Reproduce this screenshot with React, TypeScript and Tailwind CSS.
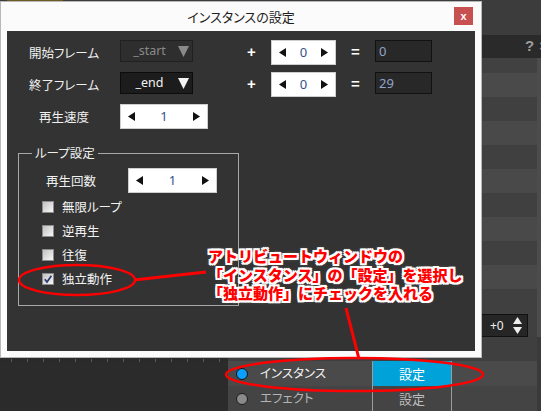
import React from 'react';

function Tri({ dir, color = '#111' }: { dir: 'l' | 'r'; color?: string }) {
  return (
    <svg width="7" height="9" viewBox="0 0 7 9">
      <polygon points={dir === 'l' ? '7,0 7,9 0,4.5' : '0,0 0,9 7,4.5'} fill={color} />
    </svg>
  );
}

function Spinner({ value, w }: { value: string; w: string }) {
  return (
    <div className={`${w} h-[25px] bg-white border border-[#cfcfcf] flex items-center justify-between px-[7px]`}>
      <Tri dir="l" />
      <span className="text-[13px] leading-none text-[#34508c] font-['Noto_Sans',sans-serif]">{value}</span>
      <Tri dir="r" />
    </div>
  );
}

function Dropdown({ value, disabled }: { value: string; disabled?: boolean }) {
  const c = disabled ? '#8a8a8a' : '#f2f2f2';
  return (
    <div
      className={`w-[73px] h-[22px] flex items-center pr-[3px] border ${
        disabled ? 'bg-[#2e2e2e] border-[#202020] text-[#8a8a8a]' : 'bg-[#1c1c1c] border-[#0c0c0c] text-[#f2f2f2]'
      }`}
    >
      <span className="flex-1 text-center text-[12.5px] leading-none font-['Noto_Sans',sans-serif]">{value}</span>
      <svg width="11" height="11" viewBox="0 0 11 11">
        <polygon points="0,0 11,0 5.5,11" fill={c} />
      </svg>
    </div>
  );
}

function Output({ value }: { value: string }) {
  return (
    <div className="w-[57px] h-[22px] bg-[#282828] border border-[#111] flex items-center pl-[3px] text-[13px] leading-none text-[#8fa3cc] font-['Noto_Sans',sans-serif]">
      {value}
    </div>
  );
}

function Sign({ ch }: { ch: string }) {
  return (
    <div className="w-[39px] h-[25px] flex items-center justify-center text-[15px] font-bold text-white font-['Liberation_Sans',sans-serif]">
      {ch}
    </div>
  );
}

function Check({ label, checked }: { label: string; checked?: boolean }) {
  return (
    <div className="h-[24px] flex items-center gap-[8px] pl-[23px]">
      <div className="w-[12px] h-[12px] border border-[#8c8c8c] bg-gradient-to-br from-[#c2c2c2] to-[#f7f7f7] flex items-center justify-center">
        {checked && (
          <svg width="10" height="10" viewBox="0 0 10 10">
            <path d="M1.8 5.2 L4 8 L8.4 1.8" stroke="#2a3b72" strokeWidth="1.7" fill="none" />
          </svg>
        )}
      </div>
      <span className="text-[12.5px] text-[#f2f2f2]">{label}</span>
    </div>
  );
}

function Dialog() {
  return (
    <div className="absolute left-0 top-[1px] w-[482px] h-[357px] bg-[#fbfbfb] border border-[#b8b8b8] flex flex-col">
      <div className="relative h-[29px] flex items-center justify-center">
        <span className="text-[13px] text-[#1e1e1e]">インスタンスの設定</span>
        <div className="absolute right-[8px] top-[5px] w-[19px] h-[18px] bg-[#c75050] flex items-center justify-center text-white text-[11px] font-bold leading-none font-['Liberation_Sans',sans-serif]">
          x
        </div>
      </div>
      <div className="mx-[6px] mb-[6px] flex-1 bg-[#333333] pt-[9px] flex flex-col">
        <div className="flex flex-col gap-[7px]">
          <div className="flex items-start">
            <div className="ml-[13px] w-[88px] h-[25px] leading-[25px] text-center text-[12.5px] text-[#f0f0f0]">開始フレーム</div>
            <div className="ml-[12px]"><Dropdown value="_start" disabled /></div>
            <div className="ml-[39px]"><Sign ch="+" /></div>
            <Spinner value="0" w="w-[65px]" />
            <Sign ch="=" />
            <Output value="0" />
          </div>
          <div className="flex items-start">
            <div className="ml-[13px] w-[88px] h-[25px] leading-[25px] text-center text-[12.5px] text-[#f0f0f0]">終了フレーム</div>
            <div className="ml-[12px]"><Dropdown value="_end" /></div>
            <div className="ml-[39px]"><Sign ch="+" /></div>
            <Spinner value="0" w="w-[65px]" />
            <Sign ch="=" />
            <Output value="29" />
          </div>
          <div className="flex items-start">
            <div className="ml-[13px] w-[88px] h-[25px] leading-[25px] text-center text-[12.5px] text-[#f0f0f0]">再生速度</div>
            <div className="ml-[12px]"><Spinner value="1" w="w-[88px]" /></div>
          </div>
        </div>

        <fieldset className="ml-[11px] mt-[16px] w-[221px] border border-[#a8a8a8] pb-[14px]">
          <legend className="ml-[13px] px-[3px] text-[12.5px] leading-[16px] text-[#f0f0f0]">ループ設定</legend>
          <div className="mt-[7px] flex items-start">
            <div className="ml-[8px] w-[88px] h-[25px] leading-[25px] text-center text-[12.5px] text-[#f0f0f0]">再生回数</div>
            <div className="ml-[13px]"><Spinner value="1" w="w-[89px]" /></div>
          </div>
          <div className="mt-[2px] flex flex-col">
            <Check label="無限ループ" />
            <Check label="逆再生" />
            <Check label="往復" />
            <Check label="独立動作" checked />
          </div>
        </fieldset>
      </div>
    </div>
  );
}

function Background() {
  const ticks = Array.from({ length: 14 });
  return (
    <div className="flex flex-col h-full">
      <div className="h-[35px] bg-[#3c3c3c]">
        <div className="ml-[7px] w-[56px] h-[1px] bg-[#6b5c22]" />
      </div>
      <div className="h-[23px] bg-[#2a2a2a] flex items-center justify-end gap-[5px] text-[15px] font-bold text-[#9c9c9c] font-['Liberation_Sans',sans-serif]">
        <span>?</span>
        <span className="-mr-[7px]">×</span>
      </div>
      <div className="flex flex-1">
        <div className="w-[228px] flex flex-col">
          <div className="flex-1 bg-[#333333]" />
          <div className="h-[53px] bg-[#2b2b2b]">
            <div className="h-[4px] bg-[#2a2a2a] flex items-end gap-[15px] pl-[11px]">
              {ticks.map((_, i) => (
                <div key={i} className="w-[1px] h-[3px] bg-[#5a5a5a]" />
              ))}
            </div>
          </div>
        </div>
        <div className="flex-1 flex">
          <div className="flex-1 flex flex-col">
            <div className="h-[15px] bg-[#414141]" />
            <div className="h-[24px] bg-[#4a4a4a]" />
            <div className="h-[24px] bg-[#404040]" />
            <div className="h-[24px] bg-[#494949]" />
            <div className="h-[24px] bg-[#404040]" />
            <div className="h-[24px] bg-[#494949]" />
            <div className="h-[24px] bg-[#404040]" />
            <div className="h-[24px] bg-[#494949]" />
            <div className="h-[24px] bg-[#404040]" />
            <div className="h-[24px] bg-[#494949]" />
            <div className="h-[24px] bg-[#404040]" />
            <div className="h-[24px] bg-[#404040] flex items-end">
              <div className="ml-[250px] w-[50px] h-[23px] bg-[#262626] border border-[#111] flex items-center justify-between pl-[11px] pr-[5px]">
                <span className="text-[12px] text-[#eee] font-['Noto_Sans',sans-serif]">+0</span>
                <svg width="9" height="18" viewBox="0 0 9 18">
                  <polygon points="4.5,0 9,7 0,7" fill="#eee" />
                  <polygon points="0,10 9,10 4.5,17" fill="#eee" />
                </svg>
              </div>
            </div>
            <div className="h-[24px] bg-[#3f3f3f]" />
            <div className="h-[25px] bg-[#4a4a4a] flex">
              <div className="w-[144px] flex items-center pl-[8px] gap-[12px]">
                <div className="w-[12px] h-[12px] rounded-full bg-[#0aa0ff] border border-[#111]" />
                <span className="text-[12.5px] text-[#f2f2f2]">インスタンス</span>
              </div>
              <div className="w-[80px] border-x border-[#9c9c9c] bg-[#00a3d9] flex items-center justify-center text-[13px] text-white">
                設定
              </div>
              <div className="flex-1" />
            </div>
            <div className="h-[25px] bg-[#444444] flex">
              <div className="w-[144px] flex items-center pl-[8px] gap-[12px]">
                <div className="w-[12px] h-[12px] rounded-full bg-[#8a8a8a] border border-[#1c1c1c]" />
                <span className="text-[12.5px] text-[#b4b4b4]">エフェクト</span>
              </div>
              <div className="w-[80px] border-x border-[#9c9c9c] flex items-center justify-center text-[13px] text-[#bdbdbd]">
                設定
              </div>
              <div className="flex-1" />
            </div>
          </div>
          <div className="w-[4px] flex flex-col">
            <div className="h-[279px] bg-[#4c4c4c]" />
            <div className="flex-1 bg-[#3a3a3a]" />
          </div>
        </div>
      </div>
    </div>
  );
}

function Annotation() {
  return (
    <>
      <svg className="absolute inset-0 pointer-events-none" width="541" height="411" viewBox="0 0 541 411">
        <ellipse cx="77" cy="280" rx="58" ry="15" fill="none" stroke="#f00" strokeWidth="2.5" />
        <line x1="134" y1="280" x2="206" y2="272" stroke="#f00" strokeWidth="3" />
        <ellipse cx="354.5" cy="374.5" rx="128.5" ry="16.5" fill="none" stroke="#f00" strokeWidth="2.5" />
        <line x1="346" y1="308" x2="359" y2="359" stroke="#f00" strokeWidth="3" />
      </svg>
      <div className="absolute left-[208px] top-[247px] text-[15px] leading-[18.5px] font-black text-[#f00] whitespace-nowrap [font-feature-settings:normal] [text-shadow:2px_0_0_#fff,-2px_0_0_#fff,0_2px_0_#fff,0_-2px_0_#fff,2px_2px_0_#fff,-2px_-2px_0_#fff,2px_-2px_0_#fff,-2px_2px_0_#fff,0_0_4px_#999]">
        <div>アトリビュートウィンドウの</div>
        <div>「インスタンス」の「設定」を選択し</div>
        <div>「独立動作」にチェックを入れる</div>
      </div>
    </>
  );
}

export default function App() {
  return (
    <div className="relative w-[541px] h-[411px] overflow-hidden bg-[#3c3c3c] font-['Noto_Sans_CJK_JP',sans-serif] [font-feature-settings:'palt']">
      <Background />
      <Dialog />
      <Annotation />
    </div>
  );
}
